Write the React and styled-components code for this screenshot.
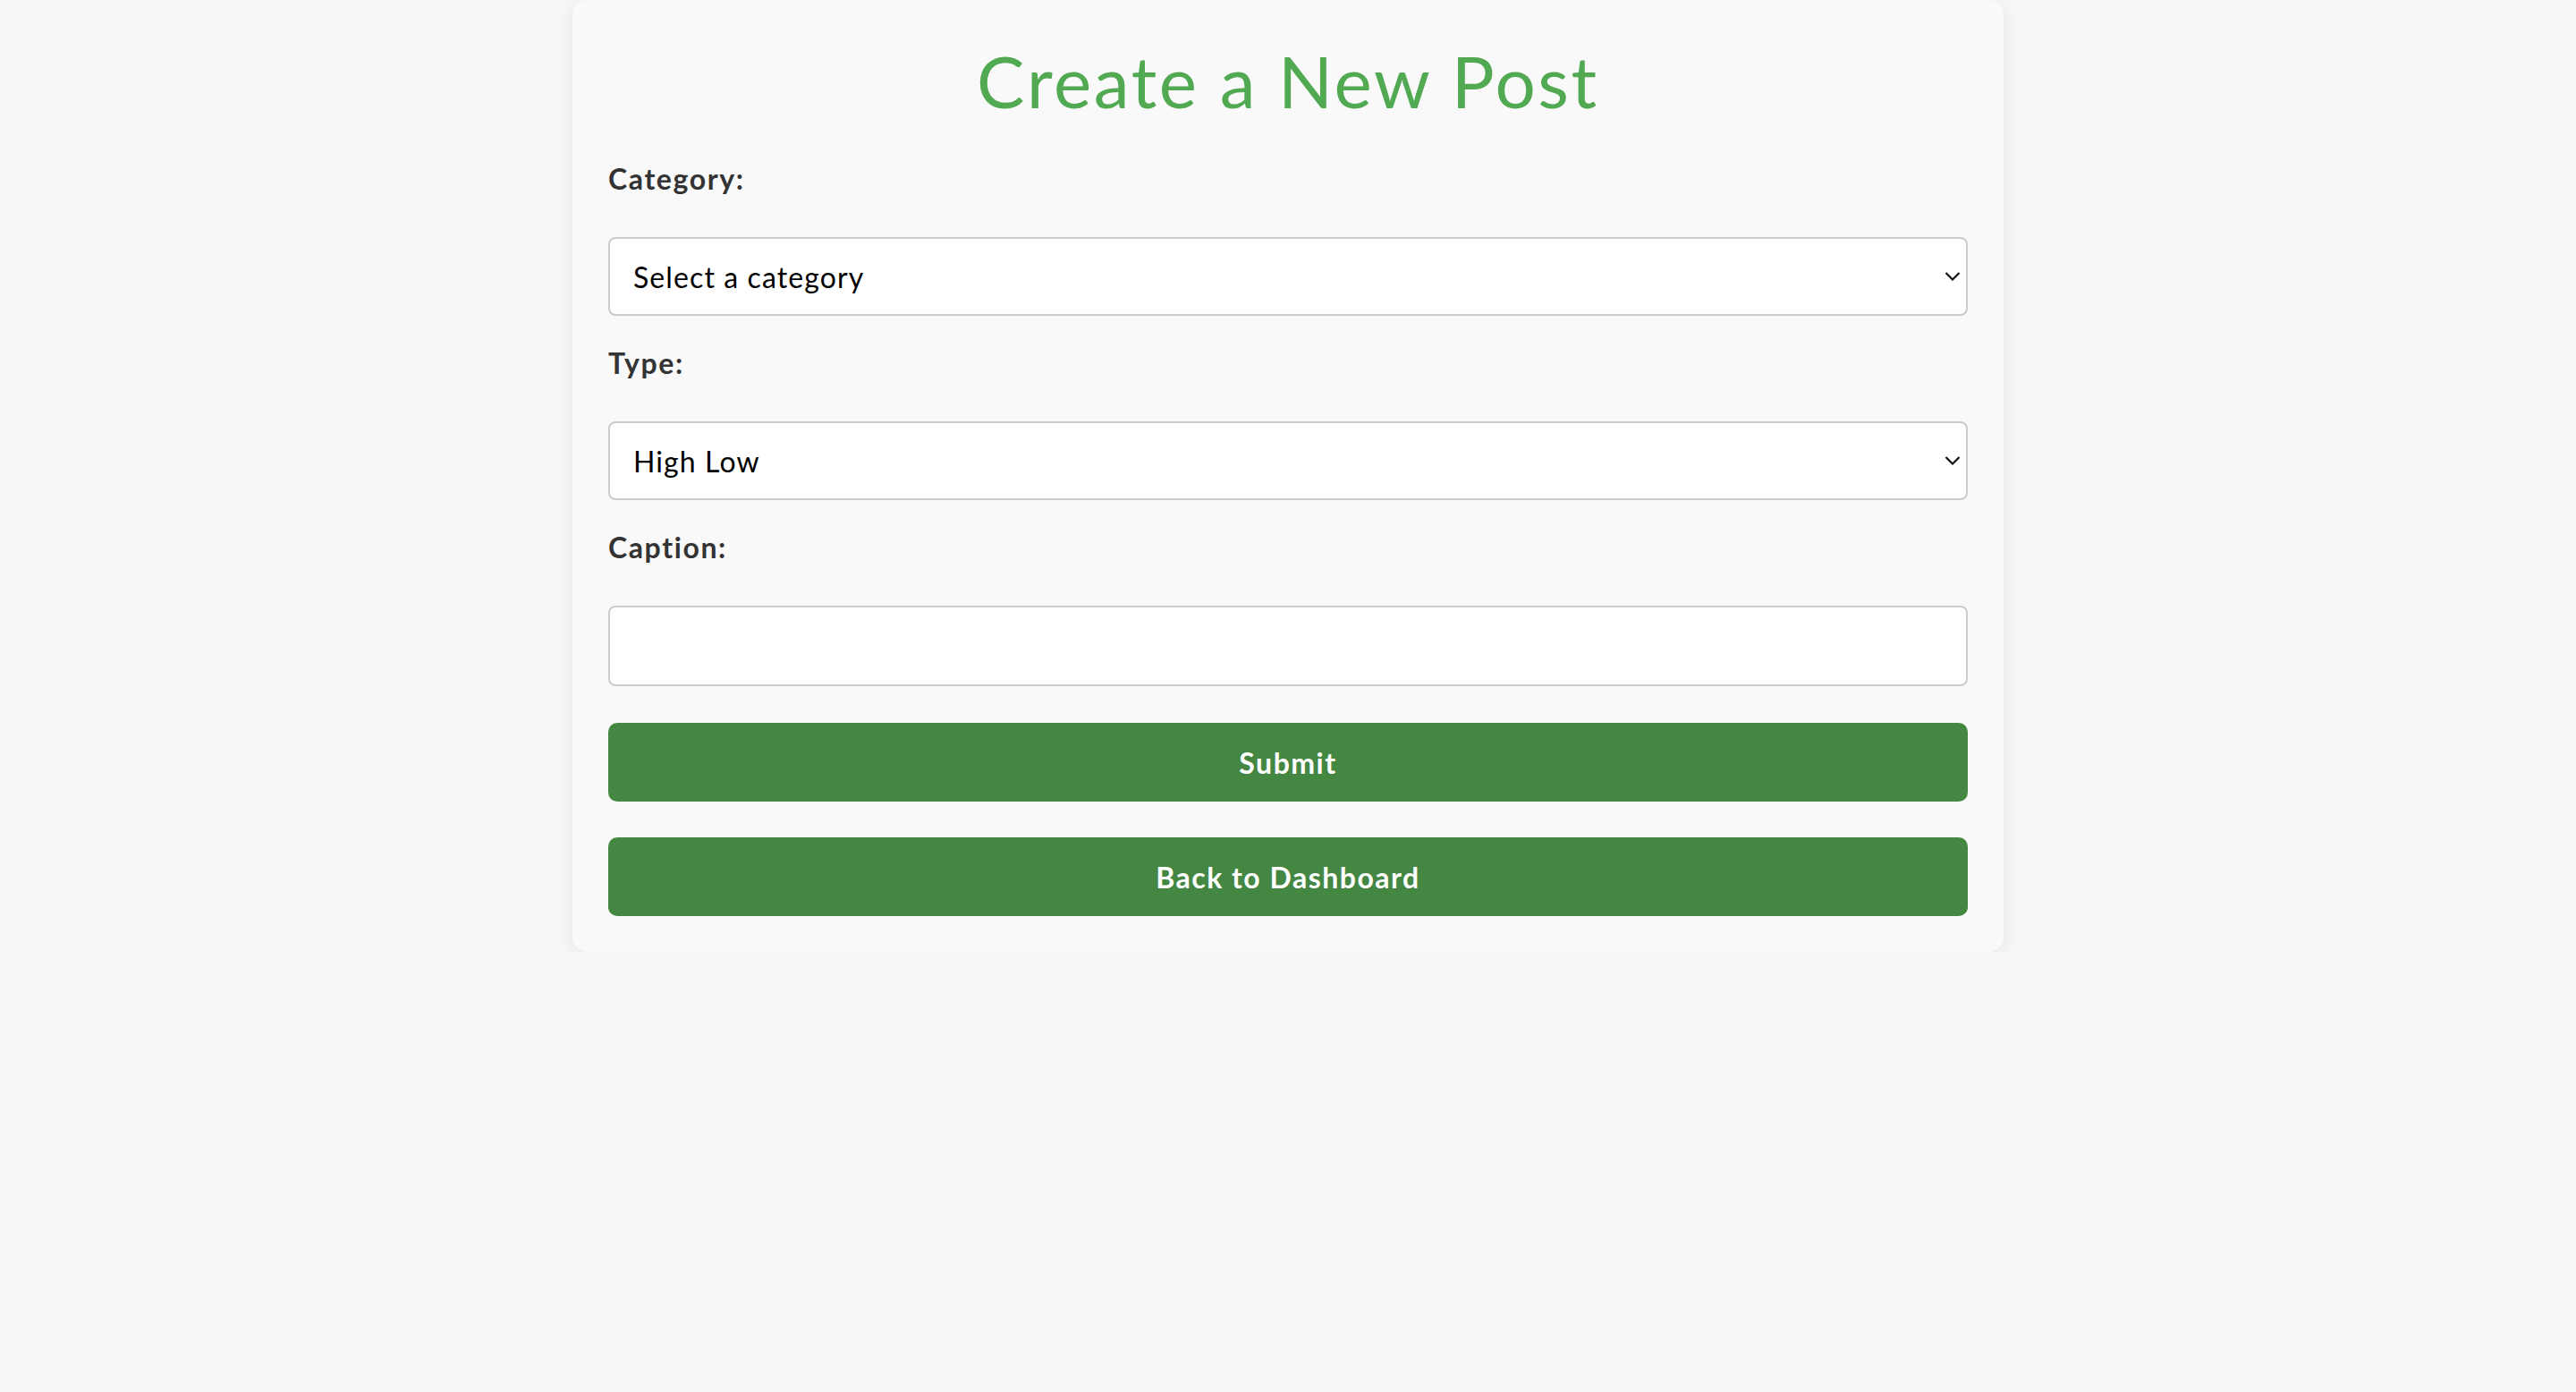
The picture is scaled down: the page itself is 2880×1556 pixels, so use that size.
import styled, { createGlobalStyle } from 'styled-components';

const GlobalStyle = createGlobalStyle`
    body{
        margin: 0;
        background: #f8f8f8;
        font-family: Lato, "Open Sans", sans-serif;
    }
`;

const Card = styled.div`
    width: 1600px;
    box-sizing: border-box;
    margin: 0 auto;
    padding: 40px;
    background: #f9f9f9;
    border-radius: 16px;
    box-shadow: 0 4px 24px rgba(0, 0, 0, 0.09);
`;

const Title = styled.h1`
    margin: 0 0 40px;
    font-size: 80px;
    line-height: 100px;
    font-weight: 400;
    letter-spacing: 2.6px;
    color: #51a952;
    text-align: center;
`;

const Label = styled.label`
    display: block;
    margin-bottom: 45px;
    font-size: 32px;
    line-height: 40px;
    font-weight: 700;
    letter-spacing: 1.6px;
    color: #333;
`;

const Field = styled.div`
    position: relative;
    margin-bottom: ${(props) => props.gap ?? 33}px;
`;

const Select = styled.select`
    display: block;
    width: 100%;
    height: 88px;
    box-sizing: border-box;
    padding: 0 60px 0 26px;
    appearance: none;
    background: #fff;
    border: 2px solid #ccc;
    border-radius: 8px;
    font-family: inherit;
    font-size: 32px;
    letter-spacing: 1.1px;
    color: #000;
`;

const Chevron = styled.svg`
    position: absolute;
    right: 8px;
    top: 50%;
    width: 18px;
    height: 12px;
    margin-top: -6px;
    pointer-events: none;
`;

const Input = styled.input`
    display: block;
    width: 100%;
    height: 90px;
    box-sizing: border-box;
    padding: 0 26px;
    background: #fff;
    border: 2px solid #ccc;
    border-radius: 8px;
    font-family: inherit;
    font-size: 32px;
`;

const Button = styled.button`
    display: block;
    width: 100%;
    height: 88px;
    margin-top: ${(props) => props.top || 40}px;
    border: none;
    border-radius: 10px;
    background: #448743;
    color: #fff;
    font-family: inherit;
    font-size: 32px;
    font-weight: 700;
    letter-spacing: 1.5px;
    cursor: pointer;
`;

const Arrow = () => (
    <Chevron viewBox="0 0 18 12">
        <path d="M1.5 2 L9 9.5 L16.5 2" fill="none" stroke="#111" strokeWidth="2.2"/>
    </Chevron>
);

const App = () => {
    return (
        <>
            <GlobalStyle/>
            <Card>
                <Title>Create a New Post</Title>
                <form onSubmit={(e) => e.preventDefault()}>
                    <Label htmlFor="category">Category:</Label>
                    <Field>
                        <Select id="category" defaultValue="">
                            <option value="">Select a category</option>
                        </Select>
                        <Arrow/>
                    </Field>
                    <Label htmlFor="type">Type:</Label>
                    <Field>
                        <Select id="type" defaultValue="highlow">
                            <option value="highlow">High Low</option>
                        </Select>
                        <Arrow/>
                    </Field>
                    <Label htmlFor="caption">Caption:</Label>
                    <Field gap={0}>
                        <Input id="caption" type="text"/>
                    </Field>
                    <Button type="submit" top={41}>Submit</Button>
                    <Button type="button">Back to Dashboard</Button>
                </form>
            </Card>
        </>
    );
}

export default App
